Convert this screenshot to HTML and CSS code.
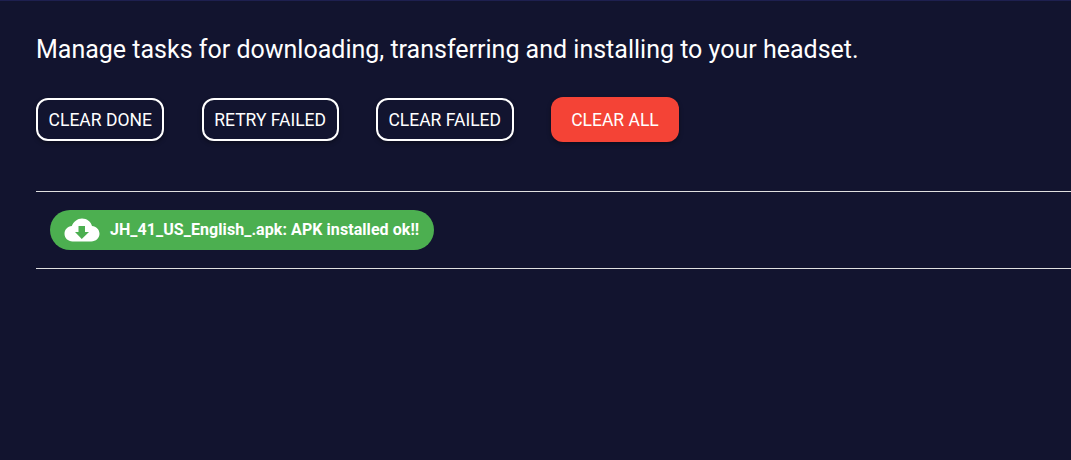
FILE: index.html
```html
<!DOCTYPE html>
<html lang="en">
<head>
<meta charset="utf-8">
<title>Tasks</title>
<link rel="stylesheet" href="styles.css">
</head>
<body>
<main class="page">
  <h1 class="intro">Manage tasks for downloading, transferring and installing to your headset.</h1>
  <div class="actions">
    <button class="btn btn-outline">CLEAR DONE</button>
    <button class="btn btn-outline">RETRY FAILED</button>
    <button class="btn btn-outline">CLEAR FAILED</button>
    <button class="btn btn-danger">CLEAR ALL</button>
  </div>
  <section class="tasks">
    <div class="task">
      <span class="pill">
        <svg class="pill-icon" viewBox="0 0 36 24" width="36" height="24" aria-hidden="true">
          <path fill="#fff" d="M18 .5c5 0 9 3.200 10 7.600 4.200.4 7.500 3.700 7.500 7.700 0 4.300-3.700 7.700-8.200 7.700H8.500C3.900 23.500.5 20 .5 15.800c0-4 3.200-7.300 7.300-7.700C9.500 3.800 13.400.5 18 .5z"/>
          <path fill="#4caf50" d="M14.500 8h6.500v6h4l-7.250 7L11 14h3.500z"/>
        </svg>
        <span class="pill-text">JH_41_US_English_.apk: APK installed ok!!</span>
      </span>
    </div>
  </section>
</main>
</body>
</html>
```
FILE: styles.css
```css
html, body {
  margin: 0;
  height: 100%;
}
body {
  background: #12142f;
  border-top: 1px solid #1e2050;
  box-sizing: border-box;
  color: #fff;
  font-family: Roboto, "Liberation Sans", sans-serif;
  overflow: hidden;
}
.page {
  padding: 0 0 0 36px;
}
.intro {
  margin: 0;
  padding-top: 35px;
  font-size: 25px;
  font-weight: 400;
  line-height: 28px;
}
.actions {
  display: flex;
  align-items: center;
  gap: 37.2px;
  margin-top: 33px;
}
.btn {
  font-family: inherit;
  font-size: 17.5px;
  font-weight: 400;
  color: #fff;
  line-height: 21px;
  cursor: pointer;
  white-space: nowrap;
  box-shadow: 0 2px 4px rgba(0, 0, 0, 0.35);
}
.btn-outline {
  background: transparent;
  border: 2px solid #fff;
  border-radius: 12px;
  padding: 10px 10.6px;
  height: 43px;
}
.btn-danger {
  background: #f44336;
  border: 0;
  border-radius: 12px;
  padding: 13px 20.4px 11px;
  height: 45px;
}
.tasks {
  margin-top: 49px;
  border-top: 1px solid #e0e0e0;
}
.task {
  display: flex;
  padding: 18px 0 18px 14px;
  border-bottom: 1px solid #e0e0e0;
}
.pill {
  display: flex;
  align-items: center;
  gap: 10px;
  height: 40px;
  padding: 0 15px 0 14px;
  border-radius: 20px;
  background: #4caf50;
  font-size: 16px;
  font-weight: 700;
  letter-spacing: 0.07px;
}
.pill-icon {
  flex: none;
}
.pill-text {
  margin-bottom: 2px;
  white-space: nowrap;
}
```
